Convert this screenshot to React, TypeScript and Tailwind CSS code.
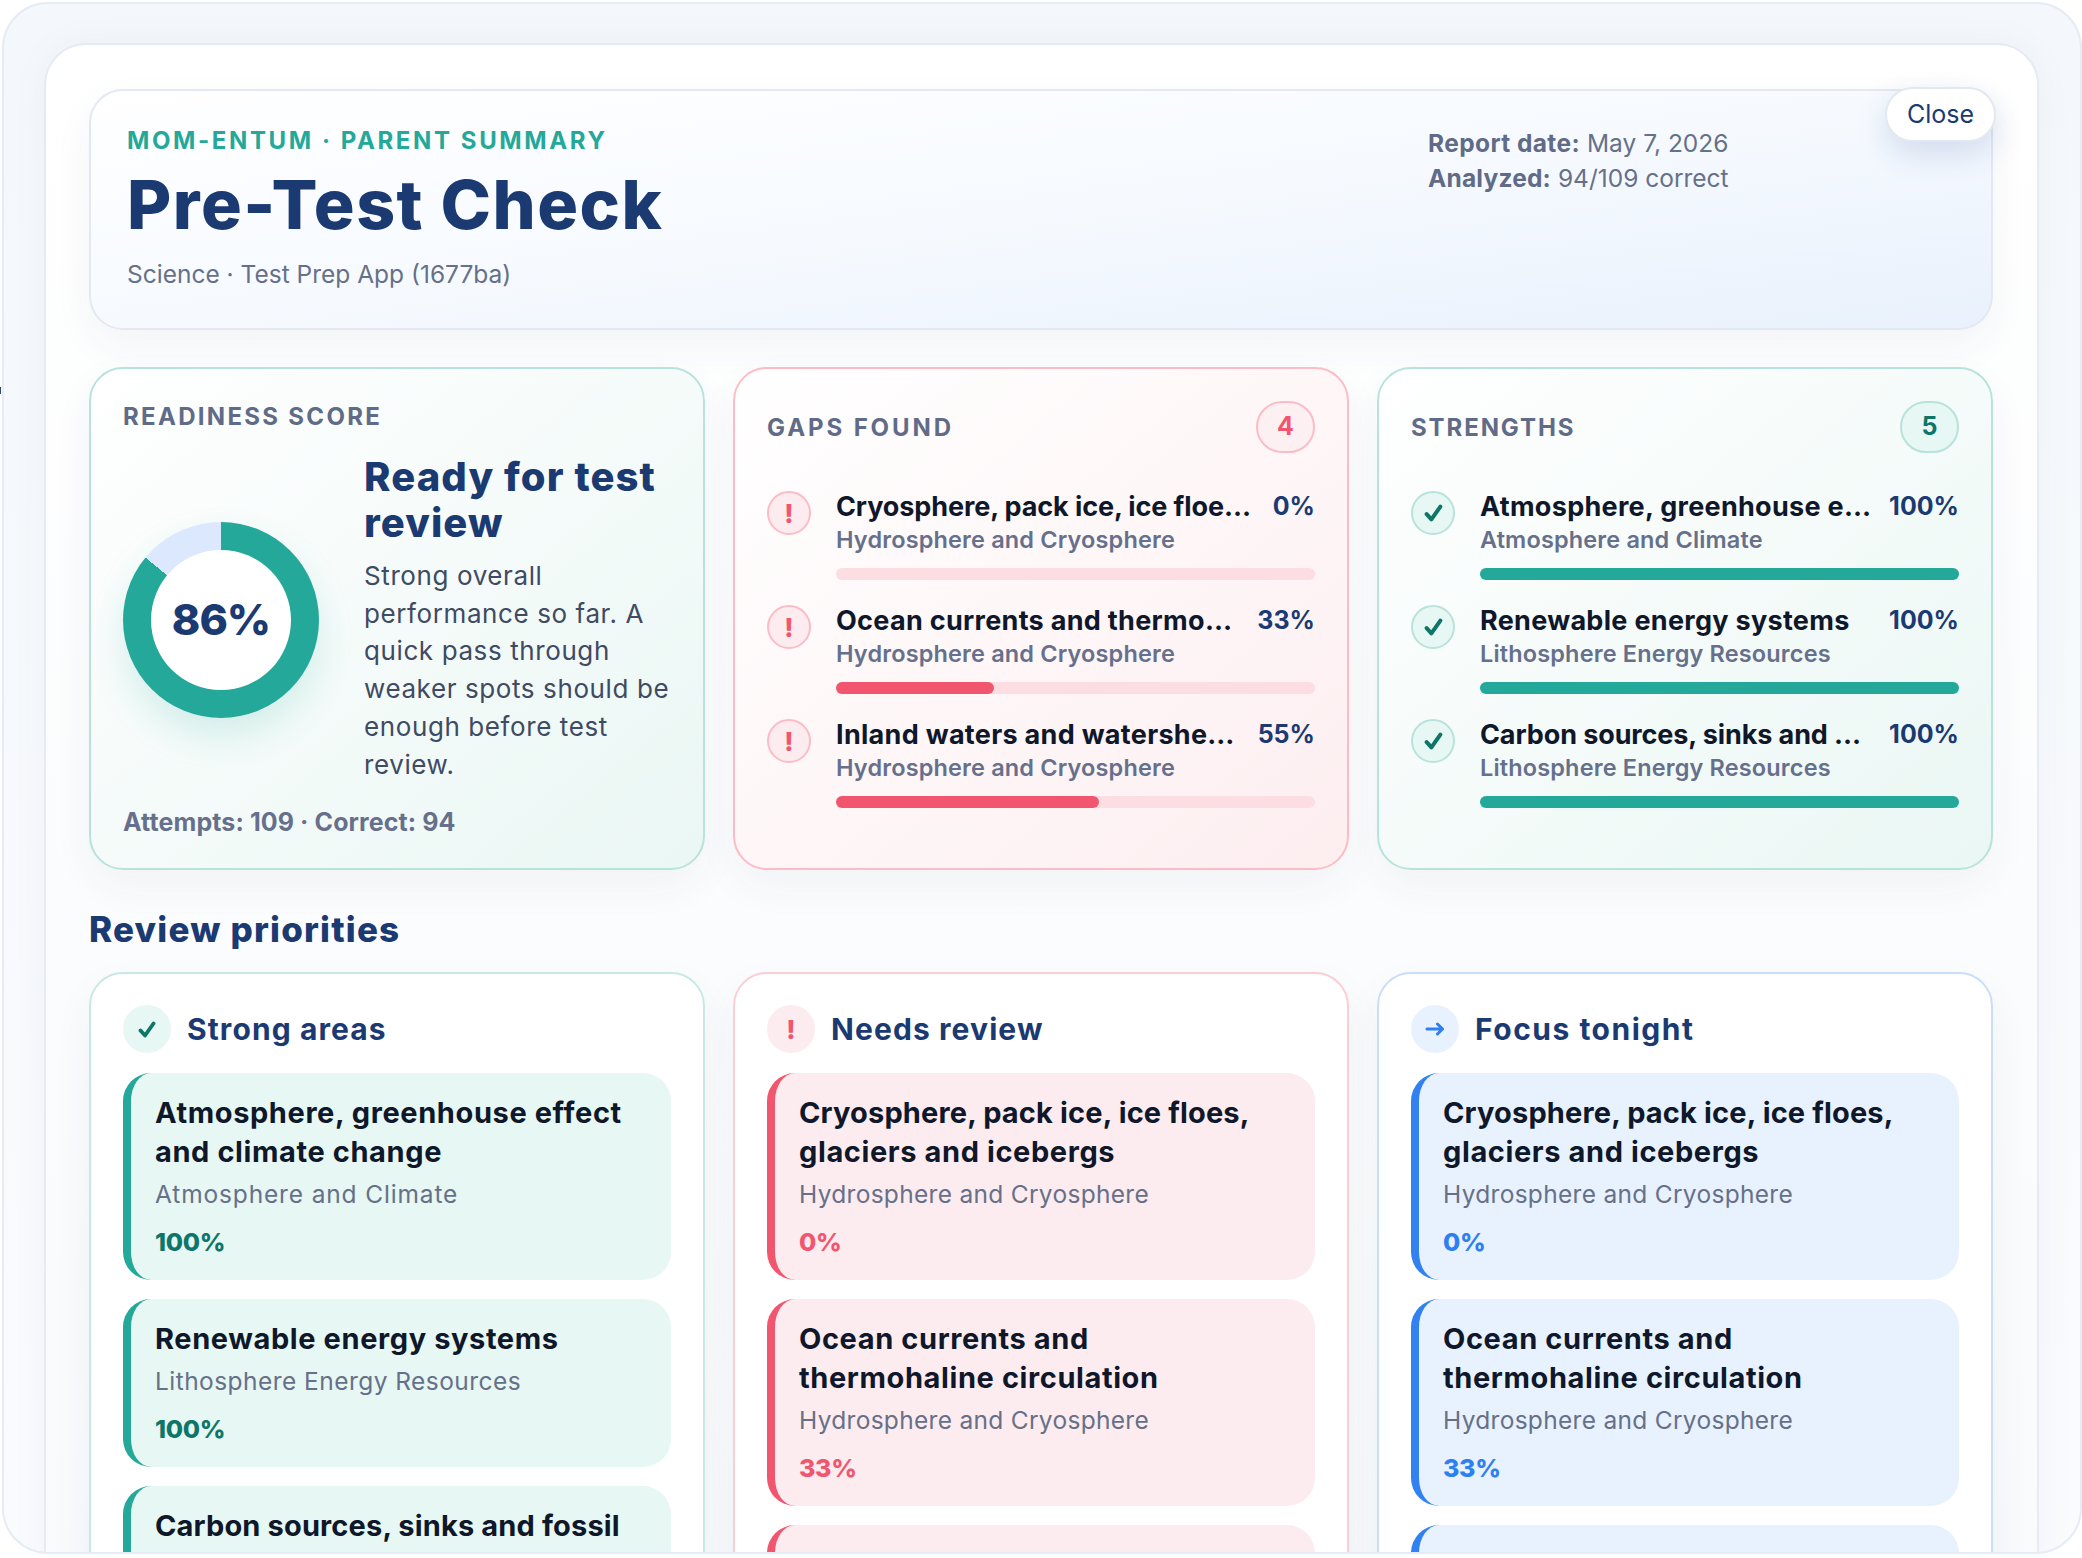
import React from 'react'

type Tone = 'teal' | 'rose' | 'blue'

const navy = 'text-[#1c3a72]'

const CheckMark = ({ className }: { className: string }) => (
  <svg viewBox="0 0 18 17" className={className} fill="none" stroke="currentColor" strokeWidth="3.8" strokeLinecap="round" strokeLinejoin="round">
    <path d="M2.5 9.5 L7 14.5 L15.5 2.5" />
  </svg>
)

const gaps = [
  { title: 'Cryosphere, pack ice, ice floe…', sub: 'Hydrosphere and Cryosphere', pct: 0 },
  { title: 'Ocean currents and thermo…', sub: 'Hydrosphere and Cryosphere', pct: 33 },
  { title: 'Inland waters and watershe…', sub: 'Hydrosphere and Cryosphere', pct: 55 },
]

const strengths = [
  { title: 'Atmosphere, greenhouse e…', sub: 'Atmosphere and Climate', pct: 100 },
  { title: 'Renewable energy systems', sub: 'Lithosphere Energy Resources', pct: 100 },
  { title: 'Carbon sources, sinks and …', sub: 'Lithosphere Energy Resources', pct: 100 },
]

const strongAreas = [
  { lines: ['Atmosphere, greenhouse effect', 'and climate change'], sub: 'Atmosphere and Climate', pct: '100%' },
  { lines: ['Renewable energy systems'], sub: 'Lithosphere Energy Resources', pct: '100%' },
  { lines: ['Carbon sources, sinks and fossil', 'fuels'], sub: 'Lithosphere Energy Resources', pct: '100%' },
]

const reviewAreas = [
  { lines: ['Cryosphere, pack ice, ice floes,', 'glaciers and icebergs'], sub: 'Hydrosphere and Cryosphere', pct: '0%' },
  { lines: ['Ocean currents and', 'thermohaline circulation'], sub: 'Hydrosphere and Cryosphere', pct: '33%' },
  { lines: ['Inland waters and watersheds'], sub: 'Hydrosphere and Cryosphere', pct: '55%' },
]

const itemTone = {
  teal: { box: 'bg-[#e7f7f3] border-[#24a899]', pct: 'text-[#0e7668]' },
  rose: { box: 'bg-[#fdecef] border-[#f2566f]', pct: 'text-[#f2566f]' },
  blue: { box: 'bg-[#e8f2fe] border-[#3182f0]', pct: 'text-[#2f7ff0]' },
}

const sectionTone = {
  teal: { card: 'border-[#c8e9e3]', icon: 'bg-[#e7f7f3]' },
  rose: { card: 'border-[#fdcdd4]', icon: 'bg-[#fdecef]' },
  blue: { card: 'border-[#c9def9]', icon: 'bg-[#e8f2fe]' },
}

// Inter runs narrower than the reference face, and not evenly
const titleTrack = (line: string) => (/^(Cryosphere|Carbon)/.test(line) ? 'tracking-[0.15px]' : 'tracking-[0.6px]')
const rowTrack = (line: string) => (/^(Cryosphere|Carbon)/.test(line) ? 'tracking-[-0.1px]' : 'tracking-[0.3px]')
const subTrack = (sub: string) => (sub.startsWith('Atmosphere') ? 'tracking-[0.85px]' : sub.startsWith('Litho') ? 'tracking-[0.45px]' : 'tracking-[0.3px]')

const Label = ({ children, className }: { children: React.ReactNode; className: string }) => (
  <div className={`text-[24px] leading-[28px] font-bold text-[#5f6b87] ${className}`}>{children}</div>
)

const ProgressList = ({ tone, items }: { tone: 'teal' | 'rose'; items: typeof gaps }) => (
  <div className="flex flex-col gap-[25px]">
    {items.map((item) => (
      <div key={item.title} className="flex gap-[25px]">
        {tone === 'rose' ? (
          <div className="w-[44px] h-[44px] rounded-full border-2 border-[#fdbcc5] bg-[#fdecef] flex items-center justify-center text-[26px] font-extrabold text-[#f2566f] shrink-0">!</div>
        ) : (
          <div className="w-[44px] h-[44px] rounded-full border-2 border-[#b8e3da] bg-[#e7f7f3] flex items-center justify-center text-[#0e7668] shrink-0">
            <CheckMark className="w-[19px] h-[18px]" />
          </div>
        )}
        <div className="flex-1 min-w-0">
          <div className="flex justify-between items-center h-[32px]">
            <span className={`text-[27px] font-bold text-[#0f172a] whitespace-nowrap ${rowTrack(item.title)}`}>{item.title}</span>
            <span className={`text-[25px] font-bold ${navy}`}>{item.pct}%</span>
          </div>
          <div className="mt-[3px] h-[28px] leading-[28px] text-[23.5px] font-semibold tracking-[0.15px] text-[#66708c]">{item.sub}</div>
          <div className={`mt-[14px] h-[12px] rounded-full ${tone === 'rose' ? 'bg-[#fcdde1]' : 'bg-[#d5f0ea]'}`}>
            <div className={`h-full rounded-full ${tone === 'rose' ? 'bg-[#f2566f]' : 'bg-[#24a899]'}`} style={{ width: `${item.pct}%` }} />
          </div>
        </div>
      </div>
    ))}
  </div>
)

const Section = ({ tone, title, icon, items, titleClass }: { tone: Tone; title: string; icon: React.ReactNode; items: typeof strongAreas; titleClass: string }) => (
  <div className={`bg-white rounded-t-[34px] border-2 shadow-[0_16px_40px_rgba(30,50,90,0.05)] ${sectionTone[tone].card} px-[32px] pt-[31px]`}>
    <div className="flex items-center gap-[16px]">
      <div className={`w-[48px] h-[48px] rounded-full flex items-center justify-center ${sectionTone[tone].icon}`}>{icon}</div>
      <div className={`text-[30px] font-bold ${titleClass} ${navy}`}>{title}</div>
    </div>
    <div className="mt-[20px] flex flex-col gap-[19px]">
      {items.map((item) => (
        <div key={item.sub + item.pct + item.lines[0]} className={`rounded-[28px] border-l-[8px] px-[24px] py-[20px] ${itemTone[tone].box}`}>
          {item.lines.map((line) => (
            <div key={line} className={`text-[29px] leading-[39px] font-bold text-[#0f172a] whitespace-nowrap ${titleTrack(line)}`}>{line}</div>
          ))}
          <div className={`mt-[5px] text-[24.5px] leading-[36px] text-[#667089] ${subTrack(item.sub)}`}>{item.sub}</div>
          <div className={`mt-[12px] text-[25px] leading-[36px] font-extrabold tracking-[-0.3px] ${itemTone[tone].pct}`}>{item.pct}</div>
        </div>
      ))}
    </div>
  </div>
)

export default function App() {
  return (
    <div className="relative w-[2082px] h-[1558px] bg-white pl-[2px] pt-[2px] overflow-hidden font-[Inter,sans-serif]">
      <div className="absolute left-0 top-[387px] w-[1px] h-[7px] bg-[#2f4a6b]" />
      <div className="h-[1552px] rounded-[46px] border-2 border-[#e6ebf5] bg-gradient-to-b from-[#f4f8fc] to-[#fafbfd] overflow-hidden pl-[40px] pr-[41px] pt-[39px]">
        <div className="relative h-[1600px] rounded-t-[42px] border-2 border-[#e5eaf3] bg-gradient-to-b from-white to-[#f8fafc] shadow-[0_0_40px_rgba(30,50,90,0.04)] pl-[43px] pr-[44px] pt-[44px]">
          <button className="absolute top-[42px] right-[41px] w-[111px] h-[55px] rounded-full bg-white border-2 border-[#e3e8f1] shadow-[0_12px_30px_rgba(30,64,140,0.15)] text-[25px] text-[#1c3a72]">
            Close
          </button>

          {/* Header */}
          <div className="h-[241px] rounded-[34px] border-2 border-[#e3e8f2] bg-gradient-to-br from-white via-[#f6faff] to-[#e9f1fc] shadow-[0_16px_40px_rgba(30,50,90,0.05)] pl-[36px] pr-[36px] grid grid-cols-[1fr_527px]">
            <div className="pt-[36px]">
              <div className="text-[24px] leading-[28px] font-bold tracking-[2.6px] text-[#24a899]">MOM-ENTUM · PARENT SUMMARY</div>
              <div className={`mt-[13px] text-[68px] leading-[72px] font-extrabold tracking-[1.5px] ${navy}`}>Pre-Test Check</div>
              <div className="mt-[16px] text-[24.5px] leading-[36px] text-[#667089]">Science · Test Prep App (1677ba)</div>
            </div>
            <div className="pt-[35px] text-[24.5px] leading-[35px] text-[#667089]">
              <div><span className="font-bold tracking-[0.4px] text-[#5f6b87]">Report date:</span> May 7, 2026</div>
              <div><span className="font-bold tracking-[0.2px] text-[#5f6b87]">Analyzed:</span> 94/109 correct</div>
            </div>
          </div>

          {/* Summary cards */}
          <div className="mt-[37px] grid grid-cols-3 gap-[28px]">
            <div className="h-[503px] rounded-[34px] border-2 border-[#b8e3da] bg-gradient-to-br from-white to-[#eaf7f4] shadow-[0_16px_40px_rgba(30,50,90,0.05)] p-[32px]">
              <Label className="tracking-[2.3px] pt-[2px]">READINESS SCORE</Label>
              <div className="mt-[23px] flex items-center gap-[45px]">
                <div className="mt-[2px] w-[196px] h-[196px] shrink-0 rounded-full bg-[conic-gradient(#24a899_0_86%,#dbe8fd_86%_100%)] shadow-[0_18px_36px_rgba(36,168,153,0.16)] flex items-center justify-center">
                  <div className={`w-[140px] h-[140px] rounded-full bg-white flex items-center justify-center text-[43px] font-extrabold tracking-[-1px] ${navy}`}>86%</div>
                </div>
                <div>
                  <div className={`text-[40px] leading-[46px] font-extrabold tracking-[1.1px] ${navy}`}>Ready for test<br />review</div>
                  <div className="mt-[11px] text-[26px] leading-[37.7px] tracking-[0.6px] text-[#3f4a63] whitespace-nowrap">
                    Strong overall<br />performance so far. A<br />quick pass through<br />weaker spots should be<br />enough before test<br />review.
                  </div>
                </div>
              </div>
              <div className="mt-[26px] text-[25px] leading-[26px] font-bold tracking-[0.1px] text-[#66708c]">Attempts: 109 · Correct: 94</div>
            </div>

            <div className="h-[503px] rounded-[34px] border-2 border-[#fdbcc5] bg-gradient-to-br from-white to-[#fdeef0] shadow-[0_16px_40px_rgba(30,50,90,0.05)] p-[32px]">
              <div className="flex items-center justify-between">
                <Label className="tracking-[2.9px] pt-[2px]">GAPS FOUND</Label>
                <div className="w-[59px] h-[52px] rounded-full border-2 border-[#fdbcc5] bg-[#fdf0f2] flex items-center justify-center text-[25px] font-bold text-[#f2566f]">4</div>
              </div>
              <div className="mt-[38px]"><ProgressList tone="rose" items={gaps} /></div>
            </div>

            <div className="h-[503px] rounded-[34px] border-2 border-[#b8e3da] bg-gradient-to-br from-white to-[#eaf7f4] shadow-[0_16px_40px_rgba(30,50,90,0.05)] p-[32px]">
              <div className="flex items-center justify-between">
                <Label className="tracking-[1.9px] pt-[2px]">STRENGTHS</Label>
                <div className="w-[59px] h-[52px] rounded-full border-2 border-[#b8e3da] bg-[#e7f7f3] flex items-center justify-center text-[25px] font-bold text-[#0e7668]">5</div>
              </div>
              <div className="mt-[38px]"><ProgressList tone="teal" items={strengths} /></div>
            </div>
          </div>

          {/* Review priorities */}
          <div className={`mt-[37px] text-[35px] leading-[44px] font-extrabold tracking-[1.2px] ${navy}`}>Review priorities</div>
          <div className="mt-[21px] grid grid-cols-3 gap-[28px]">
            <Section tone="teal" title="Strong areas" titleClass="tracking-[1.1px]" items={strongAreas} icon={<CheckMark className="w-[18px] h-[17px] text-[#0e7668]" />} />
            <Section tone="rose" title="Needs review" titleClass="tracking-[1.1px]" items={reviewAreas} icon={<span className="text-[26px] font-extrabold text-[#f2566f]">!</span>} />
            <Section tone="blue" title="Focus tonight" titleClass="tracking-[1.5px]" items={reviewAreas} icon={
              <svg viewBox="0 0 20 14" className="w-[20px] h-[14px] text-[#2f7ff0]" fill="none" stroke="currentColor" strokeWidth="3" strokeLinecap="round" strokeLinejoin="round">
                <path d="M2 7 H17.5 M12.5 2 L17.5 7 L12.5 12" />
              </svg>
            } />
          </div>
        </div>
      </div>
    </div>
  )
}
